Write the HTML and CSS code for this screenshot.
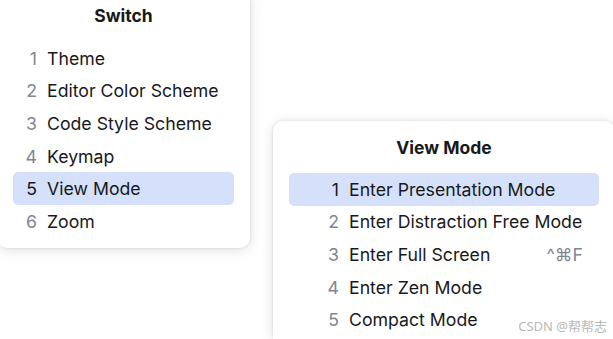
FILE: index.html
```html
<!DOCTYPE html>
<html lang="en">
  <head>
    <meta charset="UTF-8" />
    <meta name="viewport" content="width=device-width, initial-scale=1.0" />
    <title>Switch</title>
    <link rel="stylesheet" href="styles.css">
  </head>
  <body>
    <section class="popup popup--switch">
      <h2 class="popup-title">Switch</h2>
      <ul class="menu">
        <li class="menu-item"><span class="num">1</span><span class="label">Theme</span></li>
        <li class="menu-item"><span class="num">2</span><span class="label">Editor Color Scheme</span></li>
        <li class="menu-item"><span class="num">3</span><span class="label">Code Style Scheme</span></li>
        <li class="menu-item"><span class="num">4</span><span class="label">Keymap</span></li>
        <li class="menu-item is-active"><span class="num">5</span><span class="label">View Mode</span></li>
        <li class="menu-item"><span class="num">6</span><span class="label">Zoom</span></li>
      </ul>
    </section>

    <section class="popup popup--view">
      <h2 class="popup-title">View Mode</h2>
      <ul class="menu menu--wide">
        <li class="menu-item is-active"><span class="num">1</span><span class="label">Enter Presentation Mode</span></li>
        <li class="menu-item"><span class="num">2</span><span class="label">Enter Distraction Free Mode</span></li>
        <li class="menu-item"><span class="num">3</span><span class="label">Enter Full Screen</span><span class="shortcut">^⌘F</span></li>
        <li class="menu-item"><span class="num">4</span><span class="label">Enter Zen Mode</span></li>
        <li class="menu-item"><span class="num">5</span><span class="label">Compact Mode</span></li>
      </ul>
    </section>

    <span class="watermark">CSDN @帮帮志</span>
  </body>
</html>
```

FILE: styles.css
```css
html,
body {
  margin: 0;
  height: 100%;
  overflow: hidden;
}
body {
  position: relative;
  background: #fff;
  font-family: Inter, "Noto Sans", sans-serif;
  color: #18191c;
}

/* popups sit freely on the canvas */
.popup {
  position: absolute;
  background: #fff;
  border-radius: 10px;
  box-shadow: 0 0 3px rgba(0, 0, 0, 0.12), 0 2px 14px rgba(0, 0, 0, 0.12);
}
.popup--switch {
  left: -3px;
  top: -10px;
  width: 253px;
  padding: 14px 0 10px;
}
.popup--view {
  left: 273px;
  right: -2px;
  top: 121px;
  bottom: 0;
  padding: 15px 0 0;
  border-radius: 10px 10px 0 0;
  overflow: hidden;
}

.popup-title {
  margin: 0;
  font-size: 17.5px;
  font-weight: 700;
  line-height: 24px;
  text-align: center;
}

.menu {
  list-style: none;
  margin: 14px 16px 0;
  padding: 0;
}
.popup--view .menu {
  margin-top: 13px;
}
.menu-item {
  display: flex;
  align-items: center;
  height: 32.6px;
  padding-left: 12px;
  padding-right: 16px;
  border-radius: 5px;
  font-size: 17.7px;
  white-space: nowrap;
}
.menu--wide .menu-item {
  padding-left: 38px;
}
.menu-item.is-active {
  background: #d5e1fb;
}
.num {
  flex: none;
  width: 12px;
  margin-right: 10px;
  text-align: right;
  color: #818594;
}
.is-active .num {
  color: #18191c;
}
.label {
  flex: 1;
}
.shortcut {
  color: #818594;
}

.watermark {
  position: absolute;
  right: 6px;
  bottom: 5px;
  font-family: "Noto Sans", "Noto Sans CJK SC", sans-serif;
  font-size: 13px;
  line-height: 16px;
  color: #b8b8b8;
}
```
